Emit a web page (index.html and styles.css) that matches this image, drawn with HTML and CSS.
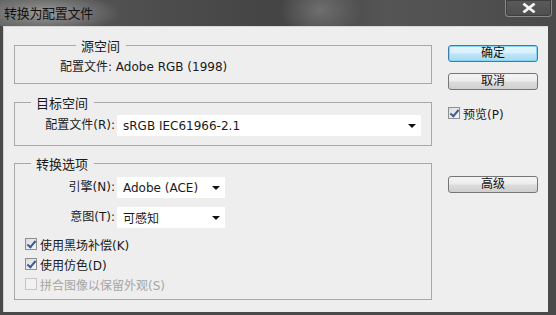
FILE: index.html
```html
<!DOCTYPE html>
<html lang="zh-CN">
<head>
<meta charset="utf-8">
<title>转换为配置文件</title>
<link rel="stylesheet" href="styles.css">
</head>
<body>
<div class="window">
  <div class="titlebar">
    <span class="title">转换为配置文件</span>
    <div class="close"><svg width="14" height="10" viewBox="0 0 14 10"><path d="M2.5 1.5 L11.5 8.5 M11.5 1.5 L2.5 8.5" stroke="#f4f4f4" stroke-width="2.8" stroke-linecap="square"/></svg></div>
  </div>
  <div class="client">
    <div class="main">
      <fieldset class="group g1">
        <legend>源空间</legend>
        <div class="line src">配置文件: Adobe RGB (1998)</div>
      </fieldset>
      <fieldset class="group g2">
        <legend>目标空间</legend>
        <div class="grid one">
          <span class="label">配置文件(R):</span>
          <div class="select wide"><span>sRGB IEC61966-2.1</span><i class="arrow"></i></div>
        </div>
      </fieldset>
      <fieldset class="group g3">
        <legend>转换选项</legend>
        <div class="grid">
          <span class="label">引擎(N):</span>
          <div class="select narrow"><span>Adobe (ACE)</span><i class="arrow"></i></div>
          <span class="label">意图(T):</span>
          <div class="select narrow"><span>可感知</span><i class="arrow"></i></div>
        </div>
        <div class="checks">
          <label class="check"><span class="box on"></span>使用黑场补偿(K)</label>
          <label class="check"><span class="box on"></span>使用仿色(D)</label>
          <label class="check disabled"><span class="box"></span>拼合图像以保留外观(S)</label>
        </div>
      </fieldset>
    </div>
    <div class="side">
      <div class="btn default">确定</div>
      <div class="btn">取消</div>
      <label class="check preview"><span class="box on"></span>预览(P)</label>
      <div class="btn adv">高级</div>
    </div>
  </div>
</div>
</body>
</html>
```

FILE: styles.css
```css
* { box-sizing: border-box; }
html, body { margin: 0; padding: 0; }
body {
  width: 556px;
  height: 315px;
  overflow: hidden;
  font-family: "DejaVu Sans", "Noto Sans CJK SC", sans-serif;
  font-size: 12px;
  color: #1a1a1a;
}
.window {
  width: 556px;
  height: 315px;
  display: flex;
  flex-direction: column;
  background: #4a4a4a;
}
.titlebar {
  height: 26px;
  flex: none;
  display: flex;
  align-items: flex-start;
  justify-content: space-between;
  background:
    radial-gradient(ellipse 75px 20px at 45px 13px, rgba(160,160,160,0.9), rgba(160,160,160,0) 100%),
    radial-gradient(ellipse 40px 30px at 320px 10px, rgba(140,140,140,0.55), rgba(140,140,140,0) 100%),
    linear-gradient(to right, #5c5c5c 0%, #4c4c4c 30%, #444 50%, #555 70%, #4a4a4a 100%);
}
.title {
  margin: 4px 0 0 4px;
  font-family: "Noto Sans CJK SC", sans-serif;
  font-size: 13px;
  line-height: 18px;
  color: #111;
  letter-spacing: -0.3px;
}
.close {
  width: 47px;
  height: 17px;
  margin-right: 4px;
  border: 1px solid #8a8a8a;
  border-top: none;
  border-radius: 0 0 4px 4px;
  background: linear-gradient(#5a5a5a, #4e4e4e);
  box-shadow: inset 0 0 0 1px #3e3e3e;
  display: flex;
  align-items: center;
  justify-content: center;
}
.close svg { display: block; margin-top: -1px; }
.client {
  flex: 1;
  margin: 0 8px 3px 3px;
  background: #eeeeee;
  display: flex;
  border-top: 1px solid #d8d8d8;
  box-shadow: inset 1px 0 0 #d0d0d0;
}
.main {
  width: 429px;
  padding-left: 11px;
}
.group {
  margin: 0;
  padding: 0;
  border: 1px solid #a8a8a8;
  min-width: 0;
  width: 418px;
}
.group legend {
  margin-left: 16px;
  padding: 0 6px 0 5px;
  font-family: "Noto Sans CJK SC", sans-serif;
  font-size: 13px;
  line-height: 17px;
  color: #1a1a1a;
}
.g1 { margin-top: 10px; padding: 5px 0 7px 45px; }
.g2 { margin-top: 10px; padding: 4px 0 9px 0; }
.g3 { margin-top: 9px; padding: 5px 0 5px 0; }
.line { line-height: 17px; }
.label { line-height: 21px; white-space: nowrap; }
.grid {
  display: grid;
  grid-template-columns: 100px 108px;
  column-gap: 2px;
  row-gap: 9px;
}
.grid.one { grid-template-columns: 100px 304px; }
.grid .label { text-align: right; }
.select {
  height: 21px;
  background: #ffffff;
  display: flex;
  align-items: center;
  justify-content: space-between;
  padding: 0 5px 0 6px;
  font-size: 12px;
}
.select.wide { width: 304px; }
.select.narrow { width: 108px; }
.arrow {
  width: 0;
  height: 0;
  border-left: 4px solid transparent;
  border-right: 4px solid transparent;
  border-top: 4px solid #111;
}
.checks {
  margin-top: 6px;
  padding-left: 10px;
  display: flex;
  flex-direction: column;
}
.check {
  display: flex;
  align-items: center;
  height: 20px;
  gap: 3px;
  white-space: nowrap;
}
.check.disabled { color: #a6a6a6; }
.box {
  width: 12px;
  height: 12px;
  border: 1px solid #8f8f8f;
  background: linear-gradient(135deg, #dcdcdc, #f6f6f6);
  position: relative;
  flex: none;
}
.check.disabled .box { border-color: #c6c6c6; background: #f2f2f2; }
.box.on::after {
  content: "";
  position: absolute;
  left: 3px;
  top: 0px;
  width: 3px;
  height: 7px;
  border-right: 2px solid #3a5a98;
  border-bottom: 2px solid #3a5a98;
  transform: rotate(40deg);
}
.side {
  width: 90px;
  margin-left: 16px;
  padding-top: 18px;
  display: flex;
  flex-direction: column;
}
.btn {
  height: 17px;
  border: 1px solid #767676;
  border-radius: 3px;
  background: linear-gradient(#f4f4f4 0%, #ececec 48%, #dcdcdc 52%, #cfcfcf 100%);
  text-align: center;
  line-height: 15px;
  font-size: 12px;
  color: #111;
}
.btn + .btn { margin-top: 11px; }
.btn.default {
  border-color: #3d7bad;
  background: linear-gradient(#e6f5fd 0%, #d8effb 48%, #bee5f8 52%, #a8d9f3 100%);
  box-shadow: inset 0 0 0 1px #84d4f4;
}
.preview { margin-top: 13px; height: 20px; }
.btn.adv { margin-top: 53px; }
```
